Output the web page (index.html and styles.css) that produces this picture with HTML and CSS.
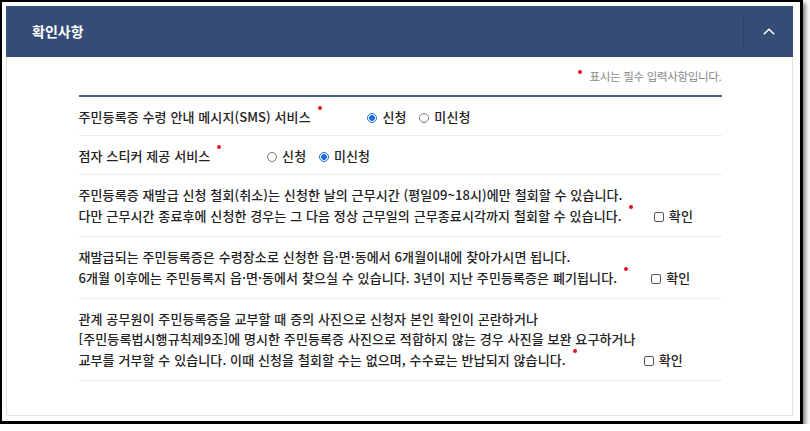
FILE: index.html
```html
<!DOCTYPE html>
<html lang="ko">
<head>
<meta charset="utf-8">
<link rel="stylesheet" href="styles.css">
</head>
<body>
<div class="frame">
  <section class="panel">
    <header class="panel-head">
      <h2 class="panel-title">확인사항</h2>
      <button class="toggle" type="button" aria-label="접기">
        <svg width="12" height="7" viewBox="0 0 12 7"><polyline points="0.8,6.3 6,1.2 11.2,6.3" fill="none" stroke="#fff" stroke-width="1.5"/></svg>
      </button>
    </header>
    <div class="panel-body">
      <p class="notice"><span class="req req-notice"></span>표시는 필수 입력사항입니다.</p>
      <ul class="list">
        <li class="row row-choice">
          <span class="label">주민등록증 수령 안내 메시지(SMS) 서비스</span><span class="req"></span>
          <span class="choices">
            <span class="opt"><span class="radio on"></span>신청</span>
            <span class="opt"><span class="radio"></span>미신청</span>
          </span>
        </li>
        <li class="row row-choice">
          <span class="label">점자 스티커 제공 서비스</span><span class="req"></span>
          <span class="choices">
            <span class="opt"><span class="radio"></span>신청</span>
            <span class="opt"><span class="radio on"></span>미신청</span>
          </span>
        </li>
        <li class="row">
          <span class="label">주민등록증 재발급 신청 철회(취소)는 신청한 날의 근무시간 (평일09~18시)에만 철회할 수 있습니다.<br>다만 근무시간 종료후에 신청한 경우는 그 다음 정상 근무일의 근무종료시각까지 철회할 수 있습니다.</span><span class="req"></span><span class="confirm gap-a"><span class="check"></span>확인</span>
        </li>
        <li class="row">
          <span class="label">재발급되는 주민등록증은 수령장소로 신청한 읍·면·동에서 6개월이내에 찾아가시면 됩니다.<br>6개월 이후에는 주민등록지 읍·면·동에서 찾으실 수 있습니다. 3년이 지난 주민등록증은 폐기됩니다.</span><span class="req"></span><span class="confirm gap-b"><span class="check"></span>확인</span>
        </li>
        <li class="row">
          <span class="label">관계 공무원이 주민등록증을 교부할 때 증의 사진으로 신청자 본인 확인이 곤란하거나<br>[주민등록법시행규칙제9조]에 명시한 주민등록증 사진으로 적합하지 않는 경우 사진을 보완 요구하거나<br>교부를 거부할 수 있습니다. 이때 신청을 철회할 수는 없으며, 수수료는 반납되지 않습니다.</span><span class="req"></span><span class="confirm gap-c"><span class="check"></span>확인</span>
        </li>
      </ul>
    </div>
  </section>
</div>
</body>
</html>
```

FILE: styles.css
```css
* { box-sizing: border-box; }
html, body { margin: 0; padding: 0; background: #fff; }
body {
  font-family: "Noto Sans CJK KR", "Noto Sans", sans-serif;
  color: #222;
}
.frame {
  width: 803px;
  height: 424px;
  border: 2px solid #000;
  border-right-width: 3px;
  border-bottom-width: 3px;
  box-shadow: 3px 3px 4px rgba(0,0,0,0.45);
  padding: 4px 7px 5px 4px;
  background: #fff;
}
.panel {
  height: 100%;
  border: 1px solid #e3e3e3;
  border-top-color: #d0d4dc;
  display: flex;
  flex-direction: column;
}
.panel-head {
  height: 51px;
  background: #354c77;
  display: flex;
  align-items: stretch;
  margin: -1px -1px 0 -1px;
}
.panel-title {
  flex: 1;
  margin: 0;
  padding-left: 26px;
  color: #fff;
  font-size: 14px;
  font-weight: 700;
  line-height: 51px;
}
.toggle {
  width: 50px;
  margin: 9px 0;
  padding: 0;
  border: 0;
  border-left: 1px solid #2f4469;
  background: transparent;
  display: flex;
  align-items: center;
  justify-content: center;
}
.panel-body {
  width: 644px;
  margin: 0 auto;
  padding-left: 1px;
}
.notice {
  margin: 11px 0 11px;
  text-align: right;
  font-size: 11.5px;
  line-height: 16px;
  color: #888;
  letter-spacing: -0.3px;
}
.list {
  list-style: none;
  margin: 0;
  padding: 0;
  border-top: 2px solid #4d6290;
}
.row {
  padding: 10px 0;
  border-bottom: 1px solid #ececec;
  font-size: 13px;
  line-height: 20px;
  font-weight: 500;
  letter-spacing: 0.1px;
}
.row-choice { padding: 9px 0 8px; }
.req {
  display: inline-block;
  width: 4px;
  height: 4px;
  border-radius: 50%;
  background: #e8141c;
  margin-left: 7px;
  vertical-align: 12px;
}
.req-notice { margin: 0 7px 0 0; vertical-align: 7px; }
.choices { margin-left: 42px; }
.opt { margin-right: 9px; }
.radio {
  display: inline-block;
  width: 10px;
  height: 10px;
  border: 1px solid #777;
  border-radius: 50%;
  margin-right: 5px;
  vertical-align: -1px;
}
.radio.on {
  border-color: #1a6fd8;
  background: radial-gradient(circle, #1a6fd8 0 2.6px, #fff 3.2px);
}
.check {
  display: inline-block;
  width: 10px;
  height: 10px;
  border: 1px solid #555;
  border-radius: 2px;
  margin-right: 5px;
  vertical-align: -1px;
}
.gap-a { margin-left: 21px; }
.gap-b { margin-left: 23px; }
.gap-c { margin-left: 67px; }
```
